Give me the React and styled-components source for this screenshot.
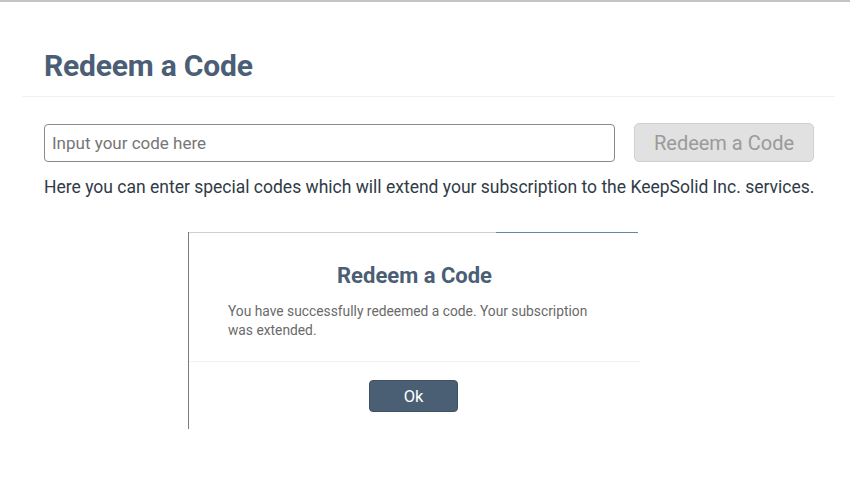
import React from "react"
import styled, { createGlobalStyle } from "styled-components"

const GlobalStyle = createGlobalStyle`
  html, body {
    margin: 0;
    padding: 0;
    background: #fff;
    font-family: Roboto, "Liberation Sans", sans-serif;
  }
`

const Page = styled.div`
  width: 850px;
  height: 500px;
  box-sizing: border-box;
  border-top: 2px solid #c4c4c4;
  overflow: hidden;
`

const Header = styled.div`
  margin: 0 15px 0 22px;
  padding: 47px 0 13px 22px;
  border-bottom: 1px solid #f2f2f2;
`

const Title = styled.h1`
  margin: 0;
  font-size: 30px;
  line-height: 34px;
  font-weight: 700;
  color: #4a5e76;
  letter-spacing: -0.2px;
`

const Content = styled.div`
  padding: 26px 0 0 44px;
`

const FormRow = styled.div`
  display: flex;
  align-items: center;
  gap: 19px;
`

const CodeInput = styled.input`
  width: 571px;
  height: 38px;
  box-sizing: border-box;
  border: 1px solid #8a8a8a;
  border-radius: 4px;
  padding: 0 7px;
  font-family: Roboto, "Liberation Sans", sans-serif;
  font-size: 17px;
  color: #333;
  outline: none;

  &::placeholder {
    color: #767676;
  }
`

const RedeemButton = styled.button`
  width: 180px;
  height: 39px;
  box-sizing: border-box;
  border: 1px solid #cfcfcf;
  border-radius: 5px;
  background: #e1e1e1;
  color: #9a9a9a;
  font-family: Roboto, "Liberation Sans", sans-serif;
  font-size: 20px;
  padding: 0;
`

const Hint = styled.p`
  margin: 14px 0 0;
  font-size: 17.5px;
  line-height: 22px;
  color: #2f3b47;
`

const Dialog = styled.div`
  width: 452px;
  margin: 34px 0 0 188px;
  border-left: 1px solid #7a7a7a;
  height: 197px;
  box-sizing: border-box;
`

const TopLine = styled.div`
  height: 1px;
  background: linear-gradient(
    to right,
    #cfcfcf 0 307px,
    #5d89ad 307px 449px,
    transparent 449px
  );
`

const DialogTitle = styled.h2`
  margin: 30px 0 0;
  text-align: center;
  font-size: 22px;
  line-height: 26px;
  font-weight: 700;
  color: #4a5e76;
`

const DialogText = styled.p`
  margin: 13px 0 0;
  padding: 0 40px 0 39px;
  font-size: 13.8px;
  line-height: 19px;
  color: #6a6a6a;
`

const DialogFooter = styled.div`
  margin-top: 21px;
  border-top: 1px solid #f3f3f3;
  display: flex;
  justify-content: center;
  padding-top: 18px;
`

const OkButton = styled.button`
  width: 89px;
  height: 32px;
  border: 1px solid #3f5164;
  border-radius: 4px;
  background: #4b5f74;
  color: #fff;
  font-family: Roboto, "Liberation Sans", sans-serif;
  font-size: 16.5px;
  padding: 0;
  margin-right: 2px;
`

export default function App() {
  return (
    <>
      <GlobalStyle />
      <Page>
        <Header>
          <Title>Redeem a Code</Title>
        </Header>
        <Content>
          <FormRow>
            <CodeInput placeholder="Input your code here" />
            <RedeemButton>Redeem a Code</RedeemButton>
          </FormRow>
          <Hint>
            Here you can enter special codes which will extend your subscription to the KeepSolid Inc. services.
          </Hint>
        </Content>
        <Dialog>
          <TopLine />
          <DialogTitle>Redeem a Code</DialogTitle>
          <DialogText>
            You have successfully redeemed a code. Your subscription was extended.
          </DialogText>
          <DialogFooter>
            <OkButton>Ok</OkButton>
          </DialogFooter>
        </Dialog>
      </Page>
    </>
  )
}
